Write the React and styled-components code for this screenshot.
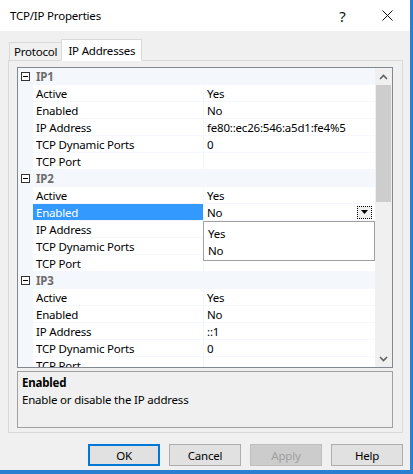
import React from "react";
import styled, { createGlobalStyle } from "styled-components";

const GlobalStyle = createGlobalStyle`
  html, body { margin: 0; padding: 0; background: #ffffff; }
  body { font-family: "Noto Sans", sans-serif; font-size: 11.5px; letter-spacing: -0.2px; color: #000; }
  * { box-sizing: border-box; }
`;

const Window = styled.div`
  width: 413px;
  height: 474px;
  display: flex;
  flex-direction: column;
  background: #f0f0f0;
  border-right: 3px solid #2b7fd0;
  border-bottom: 4px solid #2b7fd0;
`;

const TitleBar = styled.div`
  height: 31px;
  background: #ffffff;
  display: flex;
  align-items: center;
  padding-left: 10px;
`;

const Title = styled.div`
  flex: 1;
`;

const TitleButton = styled.div`
  width: 45px;
  height: 31px;
  display: flex;
  align-items: center;
  justify-content: center;
  font-size: ${(p) => p.size || 14}px;
  color: #111;
`;

const Body = styled.div`
  flex: 1;
  display: flex;
  flex-direction: column;
  padding: 7px 7px 0 8px;
`;

const TabStrip = styled.div`
  display: flex;
  align-items: flex-end;
  height: 22px;
  padding-left: 1px;
  position: relative;
  z-index: 1;
`;

const Tab = styled.div`
  height: ${(p) => (p.active ? 22 : 19)}px;
  padding: 0 ${(p) => (p.active ? 6 : 4)}px;
  display: flex;
  align-items: center;
  background: ${(p) => (p.active ? "#ffffff" : "#f0f0f0")};
  border: 1px solid #d9d9d9;
  border-bottom: ${(p) => (p.active ? "1px solid #ffffff" : "1px solid #d9d9d9")};
  margin-left: ${(p) => (p.active ? "-1px" : "0")};
  margin-bottom: -1px;
`;

const TabPanel = styled.div`
  height: 373px;
  border: 1px solid #d9d9d9;
  background: #f0f0f0;
  padding: 6px 9px 4px 8px;
  display: flex;
  flex-direction: column;
  gap: 3px;
`;

const Grid = styled.div`
  height: 301px;
  border: 1px solid #828790;
  background: #ffffff;
  display: flex;
`;

const GridContent = styled.div`
  flex: 1;
  overflow: hidden;
`;

const Row = styled.div`
  height: 17px;
  display: flex;
  position: relative;
`;

const Margin = styled.div`
  width: 15px;
  background: #f4f7fc;
  display: flex;
  align-items: center;
  padding-left: 3px;
`;

const CategoryCell = styled.div`
  flex: 1;
  background: #f4f7fc;
  color: #6d6d6d;
  font-weight: bold;
  padding-left: 3px;
  display: flex;
  align-items: center;
`;

const MinusBox = styled.div`
  width: 9px;
  height: 9px;
  border: 1px solid #333;
  position: relative;
  background: #fff;
  &::after {
    content: "";
    position: absolute;
    left: 1px;
    right: 1px;
    top: 3px;
    height: 1px;
    background: #000;
  }
`;

const NameCell = styled.div`
  width: 170px;
  padding-left: 3px;
  display: flex;
  align-items: center;
  white-space: nowrap;
  border-bottom: 1px solid #f4f7fc;
  background: ${(p) => (p.selected ? "#3399ff" : "#ffffff")};
  color: ${(p) => (p.selected ? "#ffffff" : "#000000")};
`;

const ValueCell = styled.div`
  flex: 1;
  padding-left: 3px;
  display: flex;
  align-items: center;
  white-space: nowrap;
  border-left: 1px solid #f4f7fc;
  border-bottom: 1px solid #f4f7fc;
`;

const ValueText = styled.span`
  flex: 1;
`;

const DropButton = styled.div`
  width: 15px;
  height: 13px;
  margin-right: 3px;
  border: 1px dotted #000;
  background: #f0f0f0;
  display: flex;
  align-items: center;
  justify-content: center;
`;

const DropList = styled.div`
  position: absolute;
  top: 17px;
  left: 185px;
  width: 172px;
  height: 40px;
  background: #ffffff;
  border: 1px solid #a0a0a0;
  padding-top: 3px;
  z-index: 2;
`;

const DropItem = styled.div`
  height: 17px;
  padding-left: 4px;
  display: flex;
  align-items: center;
`;

const ScrollBar = styled.div`
  width: 17px;
  background: #f0f0f0;
  display: flex;
  flex-direction: column;
`;

const ScrollArrow = styled.div`
  height: 17px;
  display: flex;
  align-items: center;
  justify-content: center;
`;

const ScrollTrack = styled.div`
  flex: 1;
  padding: 0 1px;
`;

const Thumb = styled.div`
  height: 117px;
  background: #cdcdcd;
`;

const Description = styled.div`
  flex: 1;
  border: 1px solid #a0a0a0;
  background: #f0f0f0;
  padding: 2px 4px;
  line-height: 17px;
`;

const DescTitle = styled.div`
  font-weight: bold;
`;

const ButtonRow = styled.div`
  display: flex;
  justify-content: flex-end;
  gap: 9px;
  padding-top: 11px;
`;

const Button = styled.div`
  width: 72px;
  height: 22px;
  display: flex;
  align-items: center;
  justify-content: center;
  background: ${(p) => (p.disabled ? "#cccccc" : "#e1e1e1")};
  color: ${(p) => (p.disabled ? "#a0a0a0" : "#000")};
  border: ${(p) =>
    p.primary ? "2px solid #0078d7" : p.disabled ? "1px solid #bfbfbf" : "1px solid #adadad"};
`;

const Chevron = ({ up }) => (
  <svg width="9" height="6" viewBox="0 0 9 6">
    <path
      d={up ? "M1 5 L4.5 1.5 L8 5" : "M1 1 L4.5 4.5 L8 1"}
      fill="none"
      stroke="#606060"
      strokeWidth="1.6"
    />
  </svg>
);

const groups = [
  {
    name: "IP1",
    props: [
      ["Active", "Yes"],
      ["Enabled", "No"],
      ["IP Address", "fe80::ec26:546:a5d1:fe4%5"],
      ["TCP Dynamic Ports", "0"],
      ["TCP Port", ""],
    ],
  },
  {
    name: "IP2",
    props: [
      ["Active", "Yes"],
      ["Enabled", "No", true],
      ["IP Address", ""],
      ["TCP Dynamic Ports", ""],
      ["TCP Port", ""],
    ],
  },
  {
    name: "IP3",
    props: [
      ["Active", "Yes"],
      ["Enabled", "No"],
      ["IP Address", "::1"],
      ["TCP Dynamic Ports", "0"],
      ["TCP Port", ""],
    ],
  },
];

export default function App() {
  return (
    <>
      <GlobalStyle />
      <Window>
        <TitleBar>
          <Title>TCP/IP Properties</Title>
          <TitleButton size={15}>?</TitleButton>
          <TitleButton>
            <svg width="11" height="11" viewBox="0 0 11 11">
              <path d="M0.5 0.5 L10.5 10.5 M10.5 0.5 L0.5 10.5" stroke="#111" strokeWidth="1" />
            </svg>
          </TitleButton>
        </TitleBar>
        <Body>
          <TabStrip>
            <Tab>Protocol</Tab>
            <Tab active>IP Addresses</Tab>
          </TabStrip>
          <TabPanel>
            <Grid>
              <GridContent>
                {groups.map((g) => (
                  <React.Fragment key={g.name}>
                    <Row>
                      <Margin>
                        <MinusBox />
                      </Margin>
                      <CategoryCell>{g.name}</CategoryCell>
                    </Row>
                    {g.props.map(([name, value, selected]) => (
                      <Row key={g.name + name}>
                        <Margin />
                        <NameCell selected={selected}>{name}</NameCell>
                        <ValueCell>
                          <ValueText>{value}</ValueText>
                          {selected && (
                            <DropButton>
                              <svg width="7" height="4" viewBox="0 0 7 4">
                                <path d="M0 0 L7 0 L3.5 4 Z" fill="#000" />
                              </svg>
                            </DropButton>
                          )}
                        </ValueCell>
                        {selected && (
                          <DropList>
                            <DropItem>Yes</DropItem>
                            <DropItem>No</DropItem>
                          </DropList>
                        )}
                      </Row>
                    ))}
                  </React.Fragment>
                ))}
              </GridContent>
              <ScrollBar>
                <ScrollArrow>
                  <Chevron up />
                </ScrollArrow>
                <ScrollTrack>
                  <Thumb />
                </ScrollTrack>
                <ScrollArrow>
                  <Chevron />
                </ScrollArrow>
              </ScrollBar>
            </Grid>
            <Description>
              <DescTitle>Enabled</DescTitle>
              <div>Enable or disable the IP address</div>
            </Description>
          </TabPanel>
          <ButtonRow>
            <Button primary>OK</Button>
            <Button>Cancel</Button>
            <Button disabled>Apply</Button>
            <Button>Help</Button>
          </ButtonRow>
        </Body>
      </Window>
    </>
  );
}
